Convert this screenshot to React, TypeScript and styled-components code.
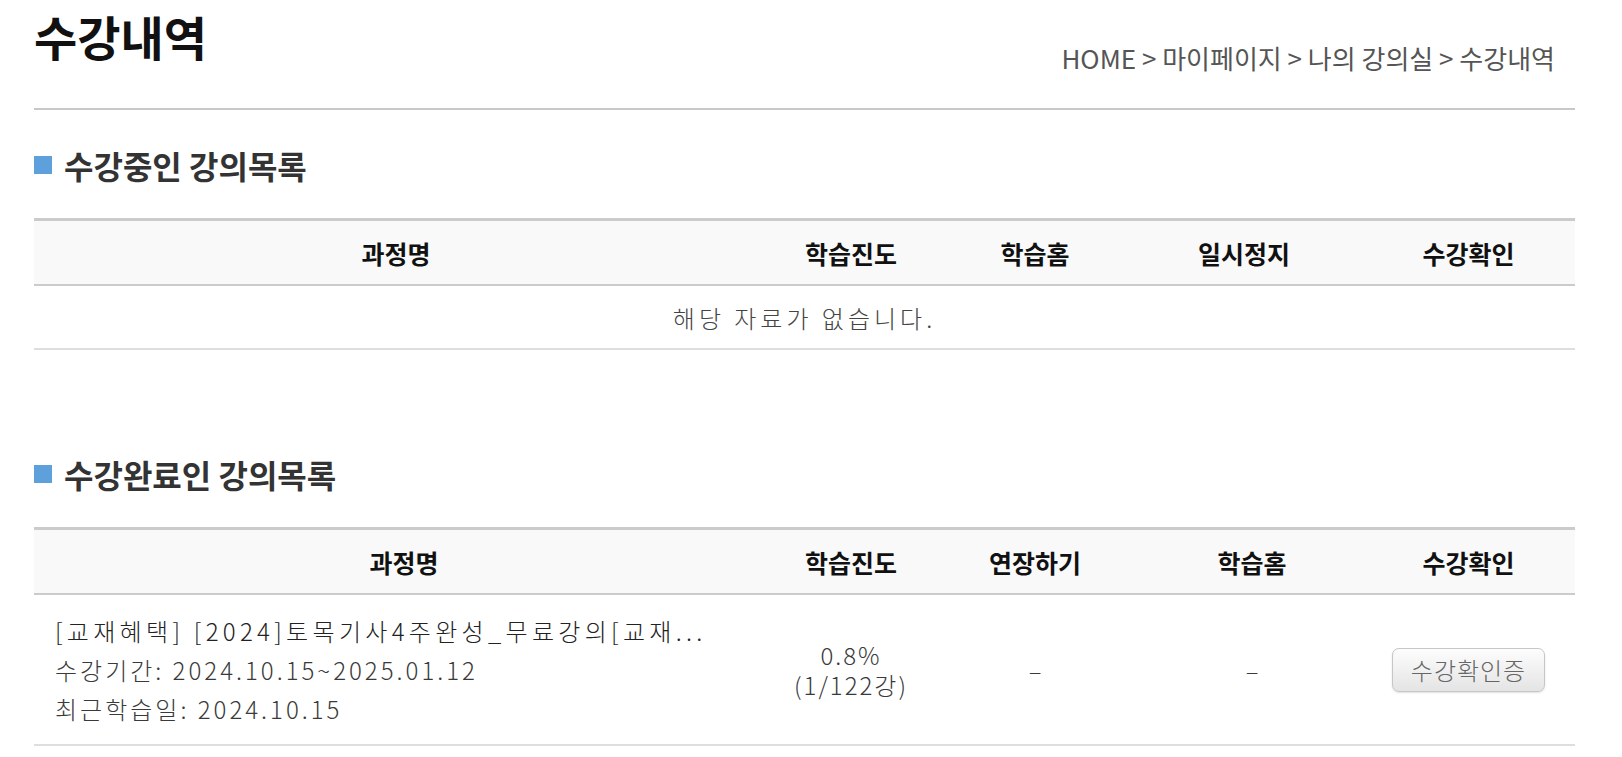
import React from "react";
import styled, { createGlobalStyle } from "styled-components";

const GlobalStyle = createGlobalStyle`
  body {
    margin: 0;
    background: #fff;
    font-family: "Noto Sans CJK KR", "Noto Sans", sans-serif;
  }
`;

interface Column {
  label: string;
  width: string;
}

const ongoingColumns: Column[] = [
  { label: "과정명", width: "724px" },
  { label: "학습진도", width: "186px" },
  { label: "학습홈", width: "182px" },
  { label: "일시정지", width: "236px" },
  { label: "수강확인", width: "1fr" },
];

const doneColumns: Column[] = [
  { label: "과정명", width: "740px" },
  { label: "학습진도", width: "154px" },
  { label: "연장하기", width: "214px" },
  { label: "학습홈", width: "220px" },
  { label: "수강확인", width: "1fr" },
];

const tpl = (cols: Column[]) => cols.map((c) => c.width).join(" ");

const SectionTitle = ({ children }: { children: React.ReactNode }) => (
  <SectionHead>
    <Square />
    <span>{children}</span>
  </SectionHead>
);

const App = () => {
  return (
    <>
      <GlobalStyle />
      <Page>
        <Header>
          <Title>수강내역</Title>
          <Breadcrumb>HOME &gt; 마이페이지 &gt; 나의 강의실 &gt; 수강내역</Breadcrumb>
        </Header>

        <Section $gap={35}>
          <SectionTitle>수강중인 강의목록</SectionTitle>
          <Table>
            <HeadRow $cols={tpl(ongoingColumns)}>
              {ongoingColumns.map((c) => (
                <HeadCell key={c.label}>{c.label}</HeadCell>
              ))}
            </HeadRow>
            <EmptyRow>해당 자료가 없습니다.</EmptyRow>
          </Table>
        </Section>

        <Section $gap={104}>
          <SectionTitle>수강완료인 강의목록</SectionTitle>
          <Table>
            <HeadRow $cols={tpl(doneColumns)}>
              {doneColumns.map((c) => (
                <HeadCell key={c.label}>{c.label}</HeadCell>
              ))}
            </HeadRow>
            <DataRow $cols={tpl(doneColumns)}>
              <CourseInfo>
                <CourseName>[교재혜택] [2024]토목기사4주완성_무료강의[교재...</CourseName>
                <div>수강기간: 2024.10.15~2025.01.12</div>
                <div>최근학습일: 2024.10.15</div>
              </CourseInfo>
              <Cell>
                <Progress>
                  <ProgressLine>0.8%</ProgressLine>
                  <ProgressLine>(1/122강)</ProgressLine>
                </Progress>
              </Cell>
              <Cell>–</Cell>
              <Cell>–</Cell>
              <Cell>
                <CertButton type="button">수강확인증</CertButton>
              </Cell>
            </DataRow>
          </Table>
        </Section>
      </Page>
    </>
  );
};

export default App;

const Page = styled.div`
  width: 1541px;
  padding-left: 34px;
`;

const Header = styled.div`
  display: flex;
  justify-content: space-between;
  align-items: flex-start;
  height: 108px;
  border-bottom: 2px solid #c8c8c8;
`;

const Title = styled.h1`
  margin: 12px 0 0 0;
  font-size: 47px;
  line-height: 48px;
  font-weight: 700;
  color: #111;
`;

const Breadcrumb = styled.div`
  margin: 42px 20px 0 0;
  font-size: 26px;
  line-height: 32px;
  color: #555;
`;

const Section = styled.section<{ $gap: number }>`
  margin-top: ${(p) => p.$gap}px;
`;

const SectionHead = styled.h2`
  display: flex;
  align-items: center;
  gap: 12px;
  margin: 0;
  height: 40px;
  font-size: 32px;
  font-weight: 700;
  color: #333;
`;

const Square = styled.i`
  width: 18px;
  height: 18px;
  background: #5ea0dc;
`;

const Table = styled.div`
  margin-top: 33px;
  border-top: 3px solid #cbcbcb;
`;

const HeadRow = styled.div<{ $cols: string }>`
  display: grid;
  grid-template-columns: ${(p) => p.$cols};
  height: 63px;
  background: #f9f9f9;
  border-bottom: 2px solid #cbcbcb;
`;

const HeadCell = styled.div`
  display: flex;
  align-items: center;
  justify-content: center;
  font-size: 25px;
  font-weight: 700;
  color: #111;
`;

const EmptyRow = styled.div`
  display: flex;
  align-items: center;
  justify-content: center;
  height: 62px;
  border-bottom: 2px solid #dedede;
  font-size: 24px;
  font-weight: 300;
  letter-spacing: 4px;
  color: #444;
`;

const DataRow = styled.div<{ $cols: string }>`
  display: grid;
  grid-template-columns: ${(p) => p.$cols};
  height: 149px;
  border-bottom: 2px solid #dedede;
  font-size: 24px;
  font-weight: 300;
  color: #3a3a3a;
`;

const CourseInfo = styled.div`
  display: flex;
  flex-direction: column;
  justify-content: center;
  padding-left: 21px;
  line-height: 39px;
  letter-spacing: 3px;
`;

const CourseName = styled.div`
  color: #222;
  letter-spacing: 4.3px;
`;

const Cell = styled.div`
  display: flex;
  align-items: center;
  justify-content: center;
  text-align: center;
`;

const Progress = styled.div`
  display: flex;
  flex-direction: column;
  align-items: center;
  letter-spacing: 2px;
`;

const ProgressLine = styled.div`
  height: 30px;
  line-height: 30px;
`;

const CertButton = styled.button`
  width: 153px;
  height: 44px;
  border: 1px solid #c6c6c6;
  border-radius: 7px;
  background: linear-gradient(#fdfdfd, #e4e4e4);
  box-shadow: 0 1px 2px rgba(0, 0, 0, 0.12);
  font-family: inherit;
  font-size: 24px;
  font-weight: 300;
  letter-spacing: 1px;
  color: #666;
  cursor: pointer;
`;
